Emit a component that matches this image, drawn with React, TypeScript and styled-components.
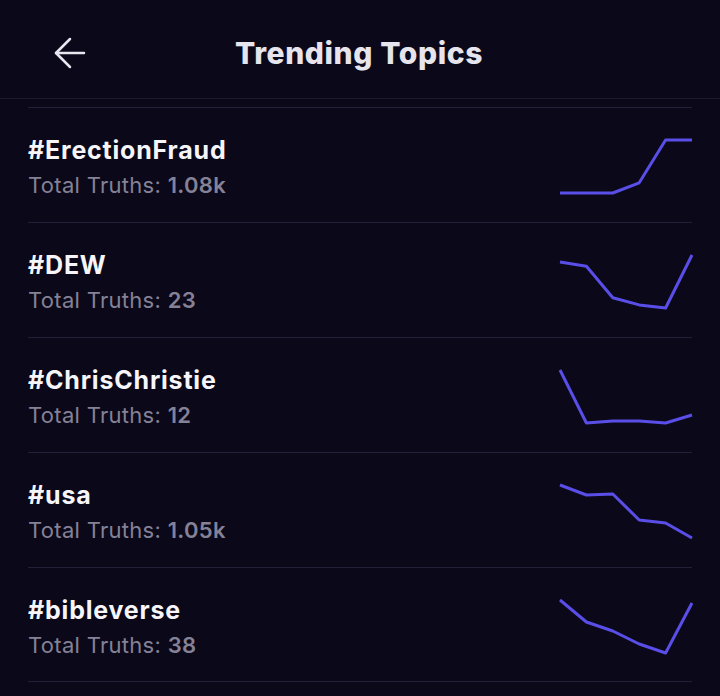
import { createGlobalStyle, styled } from 'styled-components';
import { ArrowLeft } from 'lucide-react';

const GlobalStyle = createGlobalStyle`
  html, body {
    margin: 0;
    background: #0a0819;
  }
  body {
    font-family: Inter, 'Noto Sans', sans-serif;
    -webkit-font-smoothing: antialiased;
  }
`;

const topics = [
  { tag: '#ErectionFraud', total: '1.08k', series: [0, 0, 0, 10, 52, 52] },
  { tag: '#DEW', total: '23', series: [45, 41, 10, 3, 0, 52] },
  { tag: '#ChrisChristie', total: '12', series: [53, 0, 2, 2, 0, 8] },
  { tag: '#usa', total: '1.05k', series: [53, 43, 44, 18, 15, 0] },
  { tag: '#bibleverse', total: '38', series: [53, 31, 22, 9, 0, 50] },
];

//------HEADER-----

const Screen = styled.div`
  width: 720px;
  min-height: 696px;
  background: #0a0819;
`;

const Header = styled.header`
  height: 99px;
  padding-top: 7px;
  display: grid;
  grid-template-columns: 1fr auto 1fr;
  align-items: center;
  border-bottom: 1px solid #1d1a2e;
  box-sizing: border-box;
`;

const BackButton = styled.button`
  justify-self: start;
  margin-left: 46px;
  padding: 0;
  width: 48px;
  height: 48px;
  display: flex;
  align-items: center;
  justify-content: center;
  background: none;
  border: none;
  color: #e8e6ee;
`;

const Title = styled.h1`
  margin: 0 0 0 -2px;
  font-family: Inter, sans-serif;
  font-size: 30px;
  font-weight: 800;
  color: #e6e4ec;
  letter-spacing: 0.6px;
`;

//------TOPIC LIST-----

const List = styled.ul`
  list-style: none;
  margin: 0;
  padding: 8px 28px 0;
`;

const Row = styled.li`
  height: 115px;
  display: flex;
  justify-content: space-between;
  align-items: flex-start;
  border-top: 1px solid #221f36;
  box-sizing: border-box;

  &:last-child {
    border-bottom: 1px solid #221f36;
  }
`;

const Info = styled.div`
  padding-top: 27px;
  display: flex;
  flex-direction: column;
  gap: 5px;
`;

const Tag = styled.span`
  font-size: 25px;
  line-height: 30px;
  font-weight: 700;
  color: #f6f5f9;
  letter-spacing: 0.8px;
`;

const Total = styled.span`
  font-size: 22px;
  line-height: 30px;
  color: #858196;
  letter-spacing: 0.3px;

  b {
    font-weight: 600;
  }
`;

const Chart = styled.svg`
  margin-top: 30px;
  margin-right: -2px;
  display: block;
`;

const CHART_W = 132;
const CHART_H = 53;
const PAD = 2;

const Sparkline = ({ series }: { series: number[] }) => {
  const min = Math.min(...series);
  const max = Math.max(...series);
  const step = CHART_W / (series.length - 1);
  const points = series
    .map((v, i) => {
      const x = PAD + i * step;
      const y = PAD + CHART_H - ((v - min) / (max - min || 1)) * CHART_H;
      return `${x.toFixed(1)},${y.toFixed(1)}`;
    })
    .join(' ');

  return (
    <Chart width={CHART_W + PAD * 2} height={CHART_H + PAD * 2}>
      <polyline
        points={points}
        fill="none"
        stroke="#5a4ee8"
        strokeWidth={3}
        strokeLinejoin="round"
      />
    </Chart>
  );
};

export default function App() {
  return (
    <Screen>
      <GlobalStyle />
      <Header>
        <BackButton aria-label="Back">
          <ArrowLeft size={48} strokeWidth={1.25} />
        </BackButton>
        <Title>Trending Topics</Title>
        <span />
      </Header>
      <List>
        {topics.map((t) => (
          <Row key={t.tag}>
            <Info>
              <Tag>{t.tag}</Tag>
              <Total>
                Total Truths: <b>{t.total}</b>
              </Total>
            </Info>
            <Sparkline series={t.series} />
          </Row>
        ))}
      </List>
    </Screen>
  );
}
